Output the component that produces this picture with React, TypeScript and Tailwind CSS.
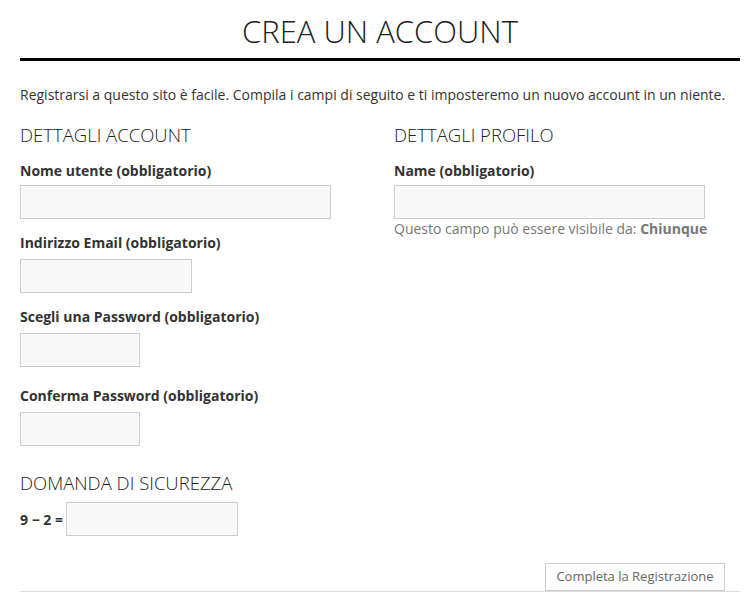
import React from "react";

const font = { fontFamily: '"Open Sans", "Noto Sans", sans-serif' };

function Field({ label, w, gap, extra }: { label: string; w: string; gap: string; extra?: React.ReactNode }) {
  return (
    <div>
      <div className="text-[14px] leading-[20px] font-bold text-[#333]">{label}</div>
      <div className={`${gap} h-[34px] border border-[#ccc] bg-[#f9f9f9] ${w}`} />
      {extra}
    </div>
  );
}

export default function App() {
  return (
    <div className="bg-white w-[746px] h-[594px] overflow-hidden" style={font}>
      <div className="mx-[20px] w-[720px]">
        <h1 className="pt-[11px] text-center text-[31px] leading-[40px] font-light text-[#222]">
          CREA UN ACCOUNT
        </h1>
        <div className="mt-[7px] h-[3px] bg-black" />
        <p className="mt-[24px] text-[14px] leading-[20px] text-[#333]">
          Registrarsi a questo sito è facile. Compila i campi di seguito e ti imposteremo un nuovo account in un niente.
        </p>
        <div className="mt-[18px] flex">
          <div className="w-[374px]">
            <h2 className="text-[18.5px] leading-[24px] font-light text-[#222]">DETTAGLI ACCOUNT</h2>
            <div className="mt-[14px] flex flex-col">
              <Field label="Nome utente (obbligatorio)" w="w-[311px]" gap="mt-[4px]" />
              <div className="mt-[14px]">
                <Field label="Indirizzo Email (obbligatorio)" w="w-[172px]" gap="mt-[6px]" />
              </div>
              <div className="mt-[14px]">
                <Field label="Scegli una Password (obbligatorio)" w="w-[120px]" gap="mt-[6px]" />
              </div>
              <div className="mt-[19px]">
                <Field label="Conferma Password (obbligatorio)" w="w-[120px]" gap="mt-[6px]" />
              </div>
            </div>
            <h2 className="mt-[25px] text-[18.5px] leading-[24px] font-light text-[#222]">DOMANDA DI SICUREZZA</h2>
            <div className="mt-[7px] flex items-center">
              <span className="text-[14px] font-bold text-[#333]">9 − 2 =</span>
              <div className="ml-[3px] h-[34px] w-[172px] border border-[#ccc] bg-[#f9f9f9]" />
            </div>
          </div>
          <div className="flex-1">
            <h2 className="text-[18.5px] leading-[24px] font-light text-[#222]">DETTAGLI PROFILO</h2>
            <div className="mt-[14px]">
              <Field
                label="Name (obbligatorio)"
                w="w-[311px]"
                gap="mt-[4px]"
                extra={
                  <p className="text-[14px] leading-[20px] text-[#777]">
                    Questo campo può essere visibile da: <span className="font-bold">Chiunque</span>
                  </p>
                }
              />
            </div>
          </div>
        </div>
        <div className="mt-[27px] flex justify-end pr-[15px]">
          <button className="h-[28px] w-[180px] border border-[#ccc] bg-white text-[13px] text-[#666]">
            Completa la Registrazione
          </button>
        </div>
        <div className="h-px bg-[#ddd]" />
      </div>
    </div>
  );
}
